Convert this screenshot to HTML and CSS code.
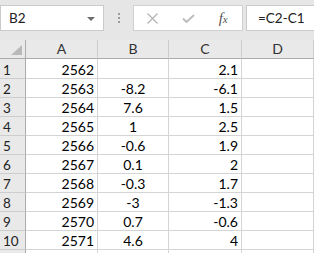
FILE: index.html
```html
<!DOCTYPE html>
<html>
<head>
<meta charset="utf-8">
<link rel="stylesheet" href="styles.css">
</head>
<body>
<div class="toolbar">
  <div class="namebox">
    <span>B2</span>
    <svg class="caret" width="8" height="4" viewBox="0 0 8 4"><path d="M0 0H8L4 4Z" fill="#6d6d6d"/></svg>
  </div>
  <div class="dots">
    <svg width="2" height="10" viewBox="0 0 2 10"><rect x="0" y="0" width="2" height="2" fill="#9c9c9c"/><rect x="0" y="4" width="2" height="2" fill="#9c9c9c"/><rect x="0" y="8" width="2" height="2" fill="#9c9c9c"/></svg>
  </div>
  <div class="buttons">
    <div class="slot s1"><svg width="11" height="11" viewBox="0 0 11 11"><path d="M0.5 0.5L10.5 10.5M10.5 0.5L0.5 10.5" stroke="#b5b5b5" stroke-width="1.3"/></svg></div>
    <div class="slot s2"><svg width="13" height="9" viewBox="0 0 13 9"><path d="M1 4.5L4.5 8L12 1" stroke="#bdbdbd" stroke-width="2" fill="none"/></svg></div>
    <div class="slot s3"><span class="fx">f<span class="x">x</span></span></div>
  </div>
  <div class="formula">=C2-C1</div>
</div>
<div class="sheet">
  <div class="corner"><svg width="11" height="10" viewBox="0 0 11 10"><path d="M11 0V10H0Z" fill="#b9b9b9"/></svg></div>
  <div class="ch">A</div><div class="ch">B</div><div class="ch">C</div><div class="ch">D</div>

  <div class="rh">1</div><div class="c r">2562</div><div class="c m"></div><div class="c r">2.1</div><div class="c"></div>
  <div class="rh">2</div><div class="c r">2563</div><div class="c m">-8.2</div><div class="c r">-6.1</div><div class="c"></div>
  <div class="rh">3</div><div class="c r">2564</div><div class="c m">7.6</div><div class="c r">1.5</div><div class="c"></div>
  <div class="rh">4</div><div class="c r">2565</div><div class="c m">1</div><div class="c r">2.5</div><div class="c"></div>
  <div class="rh">5</div><div class="c r">2566</div><div class="c m">-0.6</div><div class="c r">1.9</div><div class="c"></div>
  <div class="rh">6</div><div class="c r">2567</div><div class="c m">0.1</div><div class="c r">2</div><div class="c"></div>
  <div class="rh">7</div><div class="c r">2568</div><div class="c m">-0.3</div><div class="c r">1.7</div><div class="c"></div>
  <div class="rh">8</div><div class="c r">2569</div><div class="c m">-3</div><div class="c r">-1.3</div><div class="c"></div>
  <div class="rh">9</div><div class="c r">2570</div><div class="c m">0.7</div><div class="c r">-0.6</div><div class="c"></div>
  <div class="rh">10</div><div class="c r">2571</div><div class="c m">4.6</div><div class="c r">4</div><div class="c"></div>
  <div class="rh"></div><div class="c"></div><div class="c"></div><div class="c"></div><div class="c"></div>
</div>
</body>
</html>
```
FILE: styles.css
```css
html, body {
  margin: 0;
  padding: 0;
  background: #ffffff;
  overflow: hidden;
}
body {
  font-family: Lato, "Open Sans", sans-serif;
  font-size: 14px;
  color: #000;
}
.toolbar {
  display: flex;
  height: 40px;
  box-sizing: border-box;
  padding: 5px 0 9px 0;
  background: #e6e6e6;
}
.namebox {
  width: 104px;
  box-sizing: border-box;
  border: 1px solid #cacaca;
  background: #fff;
  display: flex;
  align-items: center;
  justify-content: space-between;
  padding: 0 8px 0 8px;
  font-size: 13.5px;
  color: #222;
}
.caret { margin-top: 1px; }
.dots {
  width: 29px;
  display: flex;
  align-items: center;
  justify-content: center;
}
.buttons {
  width: 110px;
  box-sizing: border-box;
  border: 1px solid #d0d0d0;
  background: #fff;
  display: flex;
}
.slot {
  display: flex;
  align-items: center;
  justify-content: center;
}
.s1 { width: 38px; }
.s2 { width: 33px; }
.s3 { width: 38px; }
.fx {
  font-family: "Liberation Serif", serif;
  font-style: italic;
  font-size: 15px;
  color: #555;
  line-height: 1;
}
.fx .x { font-size: 11px; }
.formula {
  flex: 1;
  margin-left: 3px;
  box-sizing: border-box;
  border: 1px solid #cacaca;
  border-right: none;
  background: #fff;
  display: flex;
  align-items: center;
  padding-left: 11px;
  font-size: 13.5px;
  color: #222;
}
.sheet {
  display: grid;
  grid-template-columns: 26px 72px 71px 73px 72px;
  grid-template-rows: 19px 20px repeat(10, 19px);
}
.sheet > div {
  box-sizing: border-box;
  line-height: 16px;
}
.corner {
  background: #e9e9e9;
  border-right: 1px solid #ababab;
  border-bottom: 1px solid #ababab;
  display: flex;
  align-items: flex-end;
  justify-content: flex-end;
  padding: 0 3px 3px 0;
}
.ch {
  background: #e9e9e9;
  border-right: 1px solid #cdcdcd;
  border-bottom: 1px solid #ababab;
  text-align: center;
  color: #333;
  font-size: 14px;
  padding-top: 1px;
}
.rh {
  background: #e9e9e9;
  border-right: 1px solid #ababab;
  border-bottom: 1px solid #cdcdcd;
  color: #222;
  font-size: 13.5px;
  padding-left: 3px;
  display: flex;
  align-items: flex-end;
}
.c {
  border-right: 1px solid #d4d4d4;
  border-bottom: 1px solid #d4d4d4;
  display: flex;
  align-items: flex-end;
  padding: 0 3px;
}
.r { justify-content: flex-end; }
.m { justify-content: center; }
```
